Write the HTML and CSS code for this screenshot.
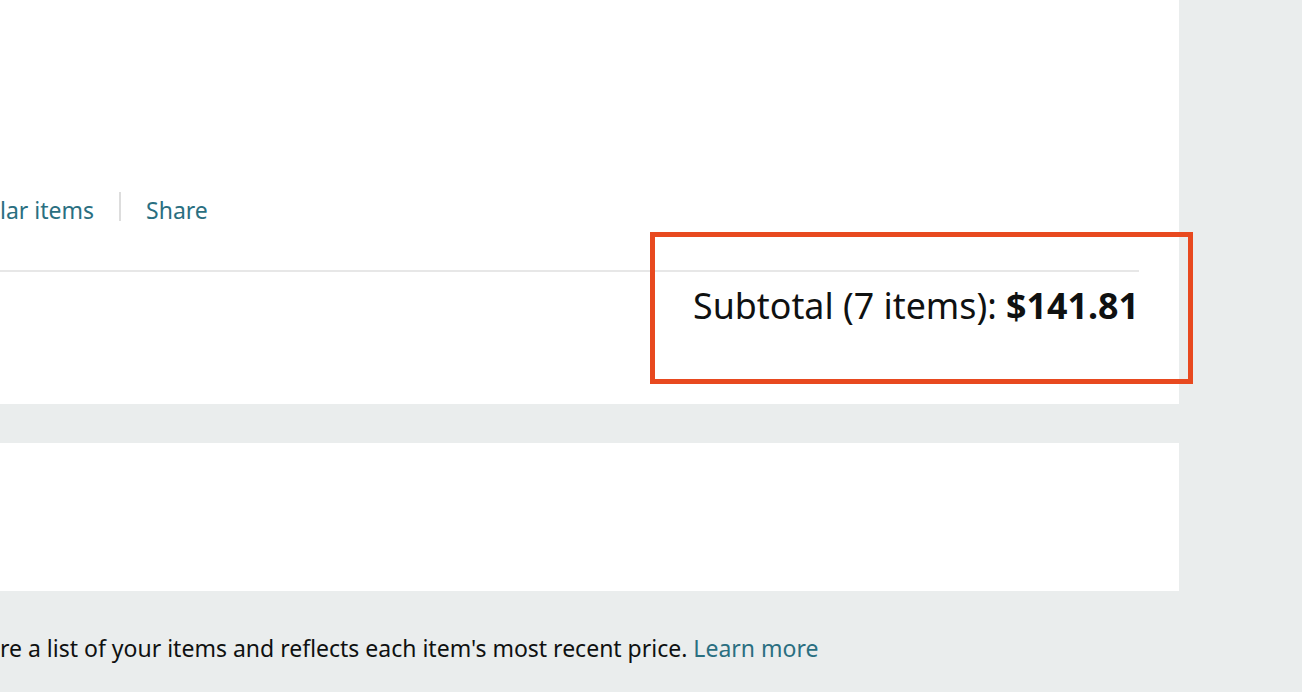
FILE: index.html
```html
<!DOCTYPE html>
<html lang="en">
<head>
<meta charset="utf-8">
<title>Shopping Cart</title>
<link rel="stylesheet" href="styles.css">
</head>
<body>
<div class="page">
  <main class="main">
    <section class="cart-panel">
      <div class="actions">
        <a class="link" href="#">lar items</a>
        <span class="sep"></span>
        <a class="link" href="#">Share</a>
      </div>
      <div class="divider"></div>
      <div class="subtotal">Subtotal (7 items): <b>$141.81</b></div>
      <div class="highlight"></div>
    </section>
    <section class="panel2"></section>
    <p class="note">re a list of your items and reflects each item's most recent price. <a class="link" href="#">Learn more</a></p>
  </main>
  <aside class="side"></aside>
</div>
</body>
</html>
```

FILE: styles.css
```css
html, body {
  margin: 0;
  padding: 0;
}
body {
  background: #eaeded;
  font-family: "Noto Sans", "Open Sans", sans-serif;
  color: #0f1111;
  overflow: hidden;
}
.page {
  display: flex;
  width: 1302px;
  height: 692px;
}
.main {
  width: 1179px;
  flex: none;
}
.side {
  flex: 1;
}
.cart-panel {
  position: relative;
  background: #fff;
  height: 404px;
  padding-top: 192px;
  box-sizing: border-box;
  padding-right: 40px;
}
.actions {
  display: flex;
  align-items: flex-start;
  gap: 25px;
  margin-left: 0;
}
.link {
  color: #2a6f81;
  text-decoration: none;
}
.actions .link {
  font-size: 23px;
  line-height: 29px;
  padding-top: 4px;
}
.sep {
  width: 2px;
  height: 29px;
  background: #dddddd;
}
.divider {
  margin-top: 45px;
  height: 2px;
  background: #e7e7e7;
}
.subtotal {
  text-align: right;
  font-size: 35.8px;
  line-height: 40px;
  margin-top: 13px;
}
.subtotal b {
  font-weight: 700;
}
.highlight {
  position: absolute;
  left: 650px;
  top: 232px;
  width: 543px;
  height: 152px;
  box-sizing: border-box;
  border: 5px solid #e8491f;
}
.panel2 {
  background: #fff;
  height: 148px;
  margin-top: 39px;
}
.note {
  margin: 0;
  padding-top: 42px;
  font-size: 23px;
  line-height: 30px;
  white-space: nowrap;
}
```
